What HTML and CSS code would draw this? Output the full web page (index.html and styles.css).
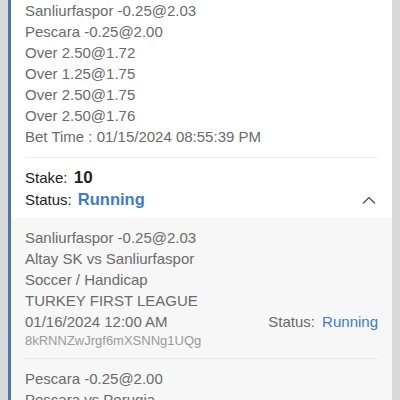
FILE: index.html
```html
<!DOCTYPE html>
<html lang="en">
<head>
    <meta charset="UTF-8">
    <meta name="viewport" content="width=device-width, initial-scale=1.0">
    <title>Bet Details</title>
    <link rel="stylesheet" href="styles.css">
</head>
<body>
    <div class="ticket">
        <div class="summary">
            <div class="line">Sanliurfaspor -0.25@2.03</div>
            <div class="line">Pescara -0.25@2.00</div>
            <div class="line">Over 2.50@1.72</div>
            <div class="line">Over 1.25@1.75</div>
            <div class="line">Over 2.50@1.75</div>
            <div class="line">Over 2.50@1.76</div>
            <div class="line">Bet Time : 01/15/2024 08:55:39 PM</div>
        </div>

        <div class="stake-block">
            <div class="stake-row">Stake: <span class="stake-value">10</span></div>
            <div class="status-row">
                <span>Status: <span class="status-value">Running</span></span>
                <svg class="chevron" width="14" height="8" viewBox="0 0 14 8">
                    <polyline points="1,7.5 7,1.5 13,7.5" fill="none" stroke="#444" stroke-width="1.1"/>
                </svg>
            </div>
        </div>

        <div class="legs">
            <div class="leg">
                <div class="line">Sanliurfaspor -0.25@2.03</div>
                <div class="line">Altay SK vs Sanliurfaspor</div>
                <div class="line">Soccer / Handicap</div>
                <div class="line">TURKEY FIRST LEAGUE</div>
                <div class="line leg-foot">
                    <span>01/16/2024 12:00 AM</span>
                    <span class="leg-status">Status: <span class="leg-status-value">Running</span></span>
                </div>
                <div class="leg-id">8kRNNZwJrgf6mXSNNg1UQg</div>
            </div>
            <div class="leg">
                <div class="line">Pescara -0.25@2.00</div>
                <div class="line">Pescara vs Perugia</div>
                <div class="line">Soccer / Handicap</div>
                <div class="line">ITALY SERIE C</div>
            </div>
        </div>
    </div>
</body>
</html>
```

FILE: styles.css
```css
html, body {
    margin: 0;
    padding: 0;
}

body {
    background-color: #d9d9d9;
    font-family: "Liberation Sans", Arial, sans-serif;
    font-size: 15px;
    color: #6a6a6a;
    height: 400px;
    overflow: hidden;
}

.ticket {
    margin: 0 8px;
    background-color: #fff;
    border-left: 3px solid #4a78ae;
    min-height: 400px;
}

.summary {
    margin: 0 14px;
    padding-bottom: 10px;
    border-bottom: 1px solid #ececec;
}

.line {
    line-height: 21px;
}

.stake-block {
    padding: 9px 14px 7px;
    color: #222;
}

.stake-row {
    line-height: 21px;
}

.stake-value {
    font-size: 17px;
    font-weight: bold;
    margin-left: 2px;
}

.status-row {
    display: flex;
    align-items: center;
    justify-content: space-between;
    line-height: 22px;
}

.status-value {
    color: #3d7cc4;
    font-size: 16.5px;
    font-weight: bold;
    margin-left: 2px;
}

.chevron {
    margin-right: 2px;
}

.legs {
    background-color: #f7f7f7;
    padding: 0 14px;
}

.leg {
    padding: 9px 0 8px;
    border-bottom: 1px solid #e8e8e8;
}

.leg-foot {
    display: flex;
    justify-content: space-between;
}

.leg-status-value {
    color: #3d7cc4;
    margin-left: 3px;
}

.leg-id {
    font-size: 13px;
    color: #9a9a9a;
    line-height: 18px;
}
```
